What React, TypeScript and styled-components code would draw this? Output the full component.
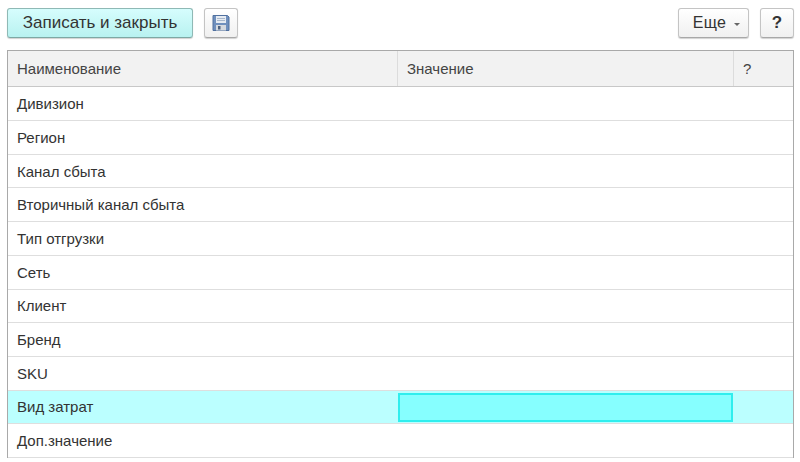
import styled, { createGlobalStyle } from "styled-components";

const rows = [
    "Дивизион",
    "Регион",
    "Канал сбыта",
    "Вторичный канал сбыта",
    "Тип отгрузки",
    "Сеть",
    "Клиент",
    "Бренд",
    "SKU",
    "Вид затрат",
    "Доп.значение",
];

const ACTIVE_ROW = "Вид затрат";

const GlobalStyle = createGlobalStyle`
  html, body {
    margin: 0;
    padding: 0;
    background: #fff;
    overflow: hidden;
  }
  body {
    font-family: "Liberation Sans", Arial, sans-serif;
    color: #333;
  }
`;

function SaveIcon() {
    return (
        <svg width="18" height="18" viewBox="0 0 18 18">
            <path d="M1 1.5h14.5l1.5 1.5v13.5H1z" fill="#6f8fbd" stroke="#50709f" strokeWidth="1" />
            <rect x="4" y="2" width="10" height="7" fill="#e6ebf2" />
            <rect x="5" y="4" width="8" height="1" fill="#a9b8cc" />
            <rect x="5" y="6" width="8" height="1" fill="#a9b8cc" />
            <rect x="4" y="11" width="10" height="5.5" fill="#d5d9df" />
            <rect x="6" y="12" width="2.5" height="3.5" fill="#4d617f" />
        </svg>
    );
}

export default function App() {
    return (
        <Page>
            <GlobalStyle />
            <Toolbar>
                <PrimaryButton>Записать и закрыть</PrimaryButton>
                <IconButton aria-label="Записать">
                    <SaveIcon />
                </IconButton>
                <Spacer />
                <MoreButton>
                    Еще
                    <Caret />
                </MoreButton>
                <HelpButton>?</HelpButton>
            </Toolbar>
            <Table>
                <HeaderRow>
                    <HeaderCell>Наименование</HeaderCell>
                    <HeaderCell>Значение</HeaderCell>
                    <HeaderCell>?</HeaderCell>
                </HeaderRow>
                {rows.map((name) => {
                    const active = name === ACTIVE_ROW;
                    return (
                        <Row key={name} $active={active}>
                            <Cell>{name}</Cell>
                            <ValueCell $active={active} />
                            <Cell />
                        </Row>
                    );
                })}
            </Table>
        </Page>
    );
}

const Page = styled.div`
  height: 462px;
  padding: 8px 6px 0 7px;
  box-sizing: border-box;
  overflow: hidden;
`;

const Toolbar = styled.div`
  display: flex;
  align-items: center;
  height: 30px;
  margin-bottom: 12px;
`;

const Spacer = styled.div`
  flex: 1;
`;

const Button = styled.button`
  height: 30px;
  box-sizing: border-box;
  padding: 0;
  display: flex;
  align-items: center;
  justify-content: center;
  font-family: "Liberation Sans", Arial, sans-serif;
  font-size: 16px;
  color: #333;
  border: 1px solid #c4c4c4;
  border-bottom-color: #a8a8a8;
  border-radius: 3px;
  background: linear-gradient(#ffffff, #f0f0f0);
  box-shadow: 0 1px 1px rgba(0, 0, 0, 0.18);
`;

const PrimaryButton = styled(Button)`
  width: 186px;
  font-size: 17px;
  border-color: #8fb9b5;
  border-bottom-color: #7da8a4;
  background: linear-gradient(#d6fdfd, #b8f2f0);
`;

const IconButton = styled(Button)`
  width: 34px;
  margin-left: 11px;
`;

const MoreButton = styled(Button)`
  width: 71px;
  padding-left: 6px;
  letter-spacing: 0.3px;
`;

const Caret = styled.span`
  width: 0;
  height: 0;
  margin-left: 8px;
  margin-top: 2px;
  border-left: 3px solid transparent;
  border-right: 3px solid transparent;
  border-top: 3px solid #666;
`;

const HelpButton = styled(Button)`
  width: 34px;
  margin-left: 11px;
  font-weight: 700;
  font-size: 17px;
`;

const Table = styled.div`
  border: 1px solid #a9a9a9;
  border-bottom: none;
`;

const Columns = styled.div`
  display: grid;
  grid-template-columns: 390px 336px 1fr;
`;

const HeaderRow = styled(Columns)`
  height: 36.4px;
  box-sizing: border-box;
  background: #f2f2f2;
  border-bottom: 1px solid #c8c8c8;
`;

const HeaderCell = styled.div`
  display: flex;
  align-items: center;
  padding-left: 9px;
  font-size: 15px;
  color: #444;
  border-right: 1px solid #dcdcdc;
  &:last-child {
    border-right: none;
  }
`;

const Row = styled(Columns)<{ $active: boolean }>`
  height: 33.7px;
  box-sizing: border-box;
  border-bottom: 1px solid #dedede;
  background: ${(props) => (props.$active ? "#bbffff" : "#fff")};
`;

const Cell = styled.div`
  display: flex;
  align-items: center;
  padding-left: 9px;
  font-size: 15px;
  color: #333;
`;

const ValueCell = styled.div<{ $active: boolean }>`
  margin: 2px 1px 1px 0;
  background: ${(props) => (props.$active ? "#86ffff" : "transparent")};
  border: ${(props) => (props.$active ? "2px solid #30eeee" : "none")};
`;
